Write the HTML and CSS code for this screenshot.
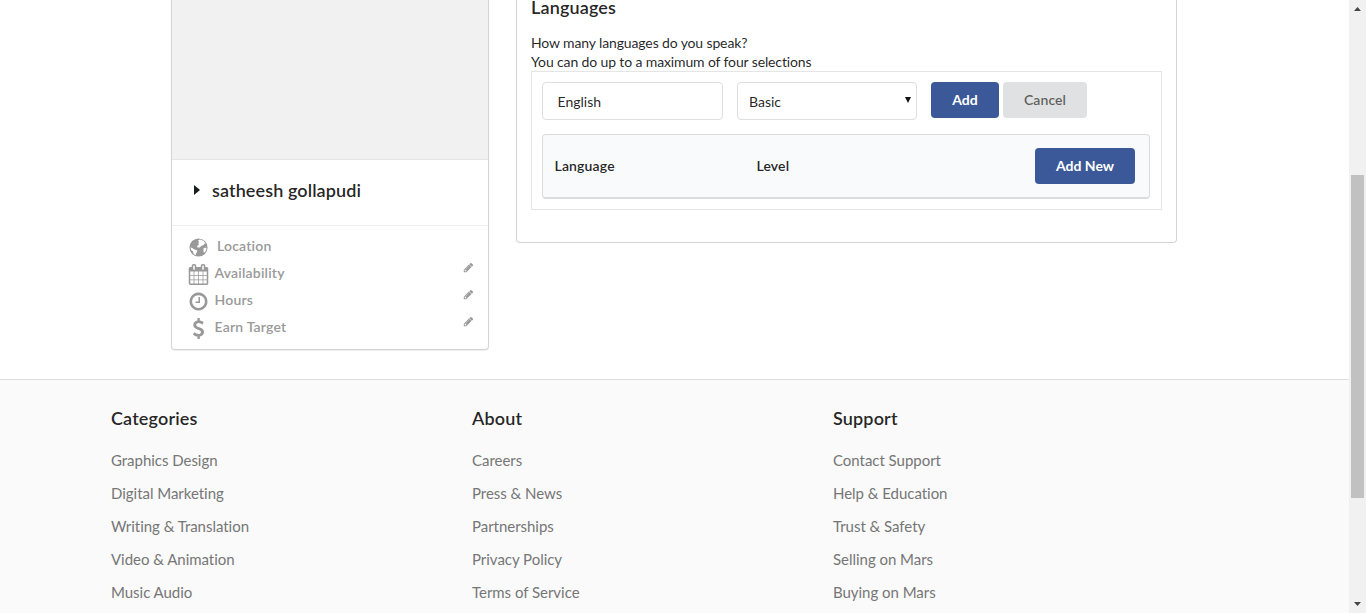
FILE: index.html
```html
<!DOCTYPE html>
<html lang="en">
<head>
<meta charset="utf-8">
<title>Profile</title>
<link rel="stylesheet" href="styles.css">
</head>
<body>
<svg class="defs" width="0" height="0">
  <symbol id="calendar" viewBox="0 0 1792 1792"><path d="M192 1664h288v-288h-288v288zm352 0h320v-288h-320v288zm-352-352h288v-320h-288v320zm352 0h320v-320h-320v320zm-352-384h288v-288h-288v288zm736 736h320v-288h-320v288zm-384-736h320v-288h-320v288zm768 736h288v-288h-288v288zm-384-352h320v-320h-320v320zm-352-864v-288q0-13-9.500-22.500t-22.500-9.500h-64q-13 0-22.500 9.500t-9.500 22.500v288q0 13 9.500 22.500t22.500 9.500h64q13 0 22.500-9.500t9.500-22.500zm736 864h288v-320h-288v320zm-384-384h320v-288h-320v288zm384 0h288v-288h-288v288zm32-480v-288q0-13-9.500-22.500t-22.500-9.500h-64q-13 0-22.500 9.500t-9.500 22.500v288q0 13 9.500 22.500t22.500 9.500h64q13 0 22.500-9.500t9.500-22.500zm384-64v1280q0 52-38 90t-90 38h-1408q-52 0-90-38t-38-90v-1280q0-52 38-90t90-38h128v-96q0-66 47-113t113-47h64q66 0 113 47t47 113v96h384v-96q0-66 47-113t113-47h64q66 0 113 47t47 113v96h128q52 0 90 38t38 90z"/></symbol>
  <symbol id="clock" viewBox="0 0 1792 1792"><path d="M1024 544v448q0 14-9 23t-23 9h-320q-14 0-23-9t-9-23v-64q0-14 9-23t23-9h224v-352q0-14 9-23t23-9h64q14 0 23 9t9 23zm416 352q0-148-73-273t-198-198-273-73-273 73-198 198-73 273 73 273 198 198 273 73 273-73 198-198 73-273zm224 0q0 209-103 385.500t-279.500 279.500-385.500 103-385.500-103-279.500-279.500-103-385.500 103-385.500 279.500-279.500 385.500-103 385.500 103 279.500 279.500 103 385.500z"/></symbol>
  <symbol id="dollar" viewBox="0 0 1792 1792"><path d="M1362 1185q0 153-99.500 263.500t-258.500 136.500v175q0 14-9 23t-23 9h-135q-13 0-22.500-9.500t-9.500-22.500v-175q-66-9-127.500-31t-101.500-44.500-74-48-46.500-37.500-17.500-18q-17-21-2-41l103-135q7-10 23-12 15-2 24 9l2 2q113 99 243 125 37 8 74 8 81 0 142.500-43t61.500-122q0-28-15-53t-33.500-42-58.500-37.500-66-32-80-32.500q-39-16-61.500-25t-61.500-26.500-62.500-31-56.500-35.500-53.500-42.500-43.500-49-35.500-58-21-66.500-8.500-78q0-138 98-242t255-134v-180q0-13 9.500-22.500t22.500-9.500h135q14 0 23 9t9 23v176q57 6 110.500 23t87 33.500 63.500 37.500 39 29 15 14q17 18 5 38l-81 146q-8 15-23 16-14 3-27-7-3-3-14.500-12t-39-26.500-58.500-32-74.500-26-85.500-11.500q-95 0-155 43t-60 111q0 26 8.500 48t29.500 41.500 39.500 33 56 31 60.500 27 70 27.500q53 20 81 31.500t76 35 75.500 42.500 62 50 53 63.500 31.500 76.500 13 94z"/></symbol>
  <symbol id="pencil" viewBox="0 0 1792 1792"><path d="M491 1536l91-91-235-235-91 91v107h128v128h107zm523-928q0-22-22-22-10 0-17 7l-542 542q-7 7-7 17 0 22 22 22 10 0 17-7l542-542q7-7 7-17zm-54-192l416 416-832 832h-416v-416zm683 96q0 53-37 90l-166 166-416-416 166-165q36-38 90-38 53 0 91 38l235 234q37 39 37 91z"/></symbol>
  <symbol id="globe" viewBox="0 0 20 20"><circle cx="10" cy="10" r="8.600"/><path fill="#fff" d="M9.500 3.200l2-.9 3.200 1.200 2.200 2.800-1.300.1-1 1.500-1.800.5-1.600 1.700-2.200-.2-.5-1.200 1.900-1.500-.6-1.500.7-1zM2.300 9.800l2.100.8 1.700 1.200 2.500.9.200 1.500-1.200 1.300-.2 1.800-2-1.100-.7-2.600-1.700-1.300zM14.800 10.800l2.600-.7.100 2-1.500 2.700-1.300-.6z"/></symbol>
</svg>
<div class="screen">
  <main class="page">
    <div class="content">
      <aside class="card">
        <div class="photo"></div>
        <div class="name"><span class="caret"></span>satheesh gollapudi</div>
        <ul class="details">
          <li><svg class="icon"><use href="#globe"/></svg><span class="first">Location</span></li>
          <li><svg class="icon"><use href="#calendar"/></svg><span>Availability</span><svg class="edit"><use href="#pencil"/></svg></li>
          <li><svg class="icon"><use href="#clock"/></svg><span>Hours</span><svg class="edit"><use href="#pencil"/></svg></li>
          <li><svg class="icon"><use href="#dollar"/></svg><span>Earn Target</span><svg class="edit"><use href="#pencil"/></svg></li>
        </ul>
      </aside>
      <section class="panel">
        <h3>Languages</h3>
        <p>How many languages do you speak?<br>You can do up to a maximum of four selections</p>
        <div class="box">
          <div class="form">
            <div class="field">English</div>
            <div class="field select">Basic<span class="arrow"></span></div>
            <div class="buttons"><button class="primary add">Add</button><button class="cancel">Cancel</button></div>
          </div>
          <div class="table">
            <b class="lang">Language</b><b class="level">Level</b><button class="primary new">Add New</button>
          </div>
        </div>
      </section>
    </div>
    <footer class="footer">
      <div><h3>Categories</h3><a>Graphics Design</a><a>Digital Marketing</a><a>Writing &amp; Translation</a><a>Video &amp; Animation</a><a>Music Audio</a></div>
      <div><h3>About</h3><a>Careers</a><a>Press &amp; News</a><a>Partnerships</a><a>Privacy Policy</a><a>Terms of Service</a></div>
      <div><h3>Support</h3><a>Contact Support</a><a>Help &amp; Education</a><a>Trust &amp; Safety</a><a>Selling on Mars</a><a>Buying on Mars</a></div>
    </footer>
  </main>
  <div class="scrollbar">
    <svg width="17" height="17"><path d="M5 11l3.500-4 3.500 4z"/></svg>
    <div class="thumb"></div>
    <svg class="down" width="17" height="17"><path d="M5 6l3.500 4 3.500-4z"/></svg>
  </div>
</div>
</body>
</html>
```
FILE: styles.css
```css
* { box-sizing: border-box; }
body { margin: 0; font: 14px/18px Lato, sans-serif; font-variant-ligatures: none; color: rgba(0,0,0,.87); background: #fff; overflow: hidden; }
h3, p, ul { margin: 0; padding: 0; }
.defs { display: block; }
.screen { display: flex; height: 613px; overflow: hidden; }
.page { width: 1349px; height: 613px; overflow: hidden; }
.content { display: flex; align-items: flex-start; height: 379px; padding-left: 171px; gap: 27px; }
.card { width: 318px; height: 350px; border: 1px solid #d4d4d5; border-top: 0; border-radius: 0 0 4px 4px; box-shadow: 0 1px 1px #ececec; }
.photo { height: 160px; background: #f1f1f1; border-bottom: 1px solid #e4e4e4; }
.name { display: flex; align-items: center; height: 66px; padding: 0 0 5px 22px; border-bottom: 1px solid #eee; font-size: 18px; font-weight: 600; letter-spacing: .1px; }
.caret { width: 6px; margin: 0 12px 1px 0; border: solid transparent; border-width: 5.500px 0 5.500px 6px; border-left-color: #1b1c1d; }
.details { list-style: none; padding: 6px 14px 0 16px; }
.details li { display: flex; align-items: center; height: 27px; color: #999; font-weight: 600; letter-spacing: .2px; }
.details span { flex: 1; padding-left: 5.500px; }
.details .first { padding-left: 8px; }
.icon { width: 21px; height: 21px; margin-top: 3px; fill: #999; }
.edit { width: 11px; height: 11px; margin-bottom: 10px; fill: #999; }
.panel { width: 661px; height: 243px; padding: 0 14px; border: 1px solid #d4d4d5; border-top: 0; border-radius: 0 0 4px 4px; }
h3 { font-size: 18px; line-height: 22px; font-weight: 600; letter-spacing: .15px; }
.panel h3 { margin-top: -4px; }
.panel p { margin-top: 15px; line-height: 19px; letter-spacing: -.13px; }
.box { width: 631px; height: 139px; padding: 10px; border: 1px solid #e5e5e6; }
.form { display: flex; align-items: flex-start; gap: 14px; }
.field { width: 181px; height: 38px; padding: 0 14.500px; line-height: 38px; border: 1px solid #dededf; border-radius: 4px; }
.select { display: flex; align-items: center; justify-content: space-between; width: 180px; padding: 1px 5px 0 11px; }
.arrow { border: solid transparent; border-width: 6px 3.500px 0; border-top-color: #111; margin-bottom: 3px; }
.buttons { display: flex; gap: 4px; }
button { height: 36px; padding: 0; border: 0; border-radius: 4px; font: 700 14px/18px Lato, sans-serif; }
.primary { background: #3b5998; color: #fff; }
.add { width: 68px; }
.cancel { width: 84px; background: #e0e1e2; color: rgba(0,0,0,.6); font-weight: 600; letter-spacing: .1px; }
.table { display: flex; align-items: center; height: 65px; width: 608px; margin-top: 14px; padding: 0 14px 0 11.500px; background: #f9fafb; border: 1px solid #dcdcdd; border-bottom: 2px solid #dbdcdd; border-radius: 4px; }
.table b { font-weight: 600; letter-spacing: .15px; }
.lang { width: 202px; }
.level { flex: 1; }
.new { width: 100px; }
.footer { display: grid; grid-template-columns: repeat(3, 361px); height: 234px; padding: 27px 0 0 111px; background: #fafafa; border-top: 1px solid #dedede; }
.footer h3 { margin-bottom: 15px; }
.footer a { display: block; height: 33px; font-size: 15px; line-height: 33px; color: #767676; letter-spacing: -.03px; }
.scrollbar { display: flex; flex-direction: column; width: 17px; height: 613px; background: #f1f1f1; }
.scrollbar svg { display: block; fill: #444; }
.thumb { width: 13px; height: 323px; margin: 158px 2px 0; background: #c1c1c1; }
.scrollbar .down { margin-top: auto; }
```
